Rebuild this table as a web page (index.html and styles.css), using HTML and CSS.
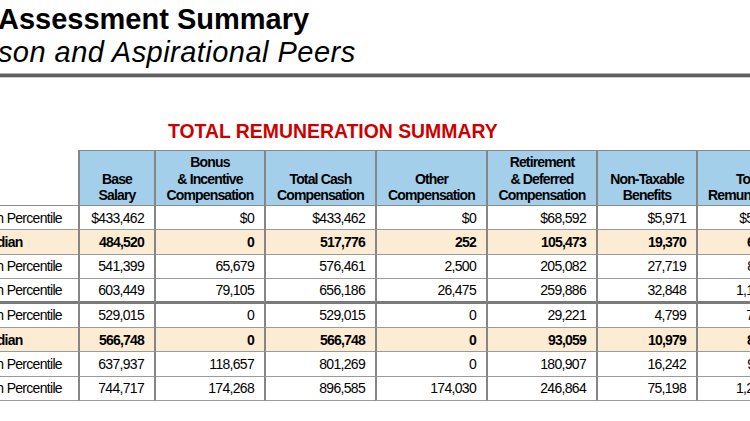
FILE: index.html
```html
<!DOCTYPE html>
<html lang="en">
<head>
<meta charset="utf-8">
<title>Total Remuneration Summary</title>
<link rel="stylesheet" href="styles.css">
</head>
<body>
<main class="page">
  <header class="doc-head">
    <h1 class="doc-title">Assessment Summary</h1>
    <p class="doc-subtitle">Comparison and Aspirational Peers</p>
    <div class="rule"></div>
  </header>

  <section class="summary">
    <h2 class="summary-title">TOTAL REMUNERATION SUMMARY</h2>
    <div class="grid">
      <div class="row head">
        <div class="corner"></div>
        <div class="hd">Base<br>Salary</div>
        <div class="hd">Bonus<br>&amp; Incentive<br>Compensation</div>
        <div class="hd">Total Cash<br>Compensation</div>
        <div class="hd">Other<br>Compensation</div>
        <div class="hd">Retirement<br>&amp; Deferred<br>Compensation</div>
        <div class="hd">Non-Taxable<br>Benefits</div>
        <div class="hd">Total<br>Remuneration</div>
      </div>

      <div class="row">
        <div class="lbl">25th Percentile</div>
        <div class="num">$433,462</div><div class="num">$0</div><div class="num">$433,462</div><div class="num">$0</div><div class="num">$68,592</div><div class="num">$5,971</div><div class="num">$508,025</div>
      </div>
      <div class="row median">
        <div class="lbl">Median</div>
        <div class="num">484,520</div><div class="num">0</div><div class="num">517,776</div><div class="num">252</div><div class="num">105,473</div><div class="num">19,370</div><div class="num">642,871</div>
      </div>
      <div class="row">
        <div class="lbl">75th Percentile</div>
        <div class="num">541,399</div><div class="num">65,679</div><div class="num">576,461</div><div class="num">2,500</div><div class="num">205,082</div><div class="num">27,719</div><div class="num">811,762</div>
      </div>
      <div class="row group-end">
        <div class="lbl">90th Percentile</div>
        <div class="num">603,449</div><div class="num">79,105</div><div class="num">656,186</div><div class="num">26,475</div><div class="num">259,886</div><div class="num">32,848</div><div class="num">1,104,531</div>
      </div>

      <div class="row">
        <div class="lbl">25th Percentile</div>
        <div class="num">529,015</div><div class="num">0</div><div class="num">529,015</div><div class="num">0</div><div class="num">29,221</div><div class="num">4,799</div><div class="num">716,402</div>
      </div>
      <div class="row median">
        <div class="lbl">Median</div>
        <div class="num">566,748</div><div class="num">0</div><div class="num">566,748</div><div class="num">0</div><div class="num">93,059</div><div class="num">10,979</div><div class="num">815,347</div>
      </div>
      <div class="row">
        <div class="lbl">75th Percentile</div>
        <div class="num">637,937</div><div class="num">118,657</div><div class="num">801,269</div><div class="num">0</div><div class="num">180,907</div><div class="num">16,242</div><div class="num">983,118</div>
      </div>
      <div class="row">
        <div class="lbl">90th Percentile</div>
        <div class="num">744,717</div><div class="num">174,268</div><div class="num">896,585</div><div class="num">174,030</div><div class="num">246,864</div><div class="num">75,198</div><div class="num">1,218,677</div>
      </div>
    </div>
  </section>
</main>
</body>
</html>
```

FILE: styles.css
```css
* { box-sizing: border-box; }

html, body {
  margin: 0;
  padding: 0;
}

body {
  width: 750px;
  height: 421px;
  overflow: hidden;
  background: #ffffff;
  color: #000000;
  font-family: "Liberation Sans", Arial, sans-serif;
}

.doc-head {
  padding-top: 3px;
}

.doc-title {
  margin: 0 0 0 -2px;
  font-size: 29px;
  line-height: 33px;
  font-weight: 700;
  white-space: nowrap;
}

.doc-subtitle {
  margin: 0;
  font-size: 29px;
  line-height: 32px;
  font-style: italic;
  font-weight: 400;
  letter-spacing: 0.47px;
  white-space: nowrap;
  text-indent: -115px;
}

.rule {
  height: 5px;
  margin-top: 5px;
  border-top: 1px solid #b0b0b0;
  border-bottom: 1px solid #cfcfcf;
  background: #5f5f5f;
}

.summary-title {
  margin: 42px 0 8px 0;
  padding-left: 168px;
  font-size: 19.4px;
  line-height: 22px;
  font-weight: 700;
  color: #cc0000;
  white-space: nowrap;
}

.grid {
  display: grid;
  grid-template-columns: 99px 76px 110px 111px 111px 110px 100px 106px;
  grid-template-rows: 56px repeat(8, 24.4px);
  width: 823px;
  margin-left: -21px;
  font-size: 14px;
}

.row {
  display: contents;
}

.corner {
  border-bottom: 1px solid #8e8e8e;
}

.hd {
  display: flex;
  flex-direction: column;
  justify-content: flex-end;
  align-items: center;
  text-align: center;
  padding-bottom: 1px;
  background: #a3cfea;
  border-top: 1px solid #8a8a8a;
  border-left: 2px solid #868686;
  border-bottom: 1px solid #8a8a8a;
  font-weight: 700;
  line-height: 16.7px;
  letter-spacing: -0.85px;
  white-space: nowrap;
}

.lbl,
.num {
  display: flex;
  align-items: center;
  border-bottom: 1px solid #9a9a9a;
  letter-spacing: -0.7px;
  white-space: nowrap;
}

.lbl {
  justify-content: flex-start;
}

.num {
  justify-content: flex-end;
  padding-right: 10px;
  border-left: 2px solid #868686;
}

.median .lbl,
.median .num {
  background: #fcecd3;
  font-weight: 700;
  letter-spacing: -0.8px;
}

.group-end .lbl,
.group-end .num {
  border-bottom: 3px solid #7a7a7a;
}
```
